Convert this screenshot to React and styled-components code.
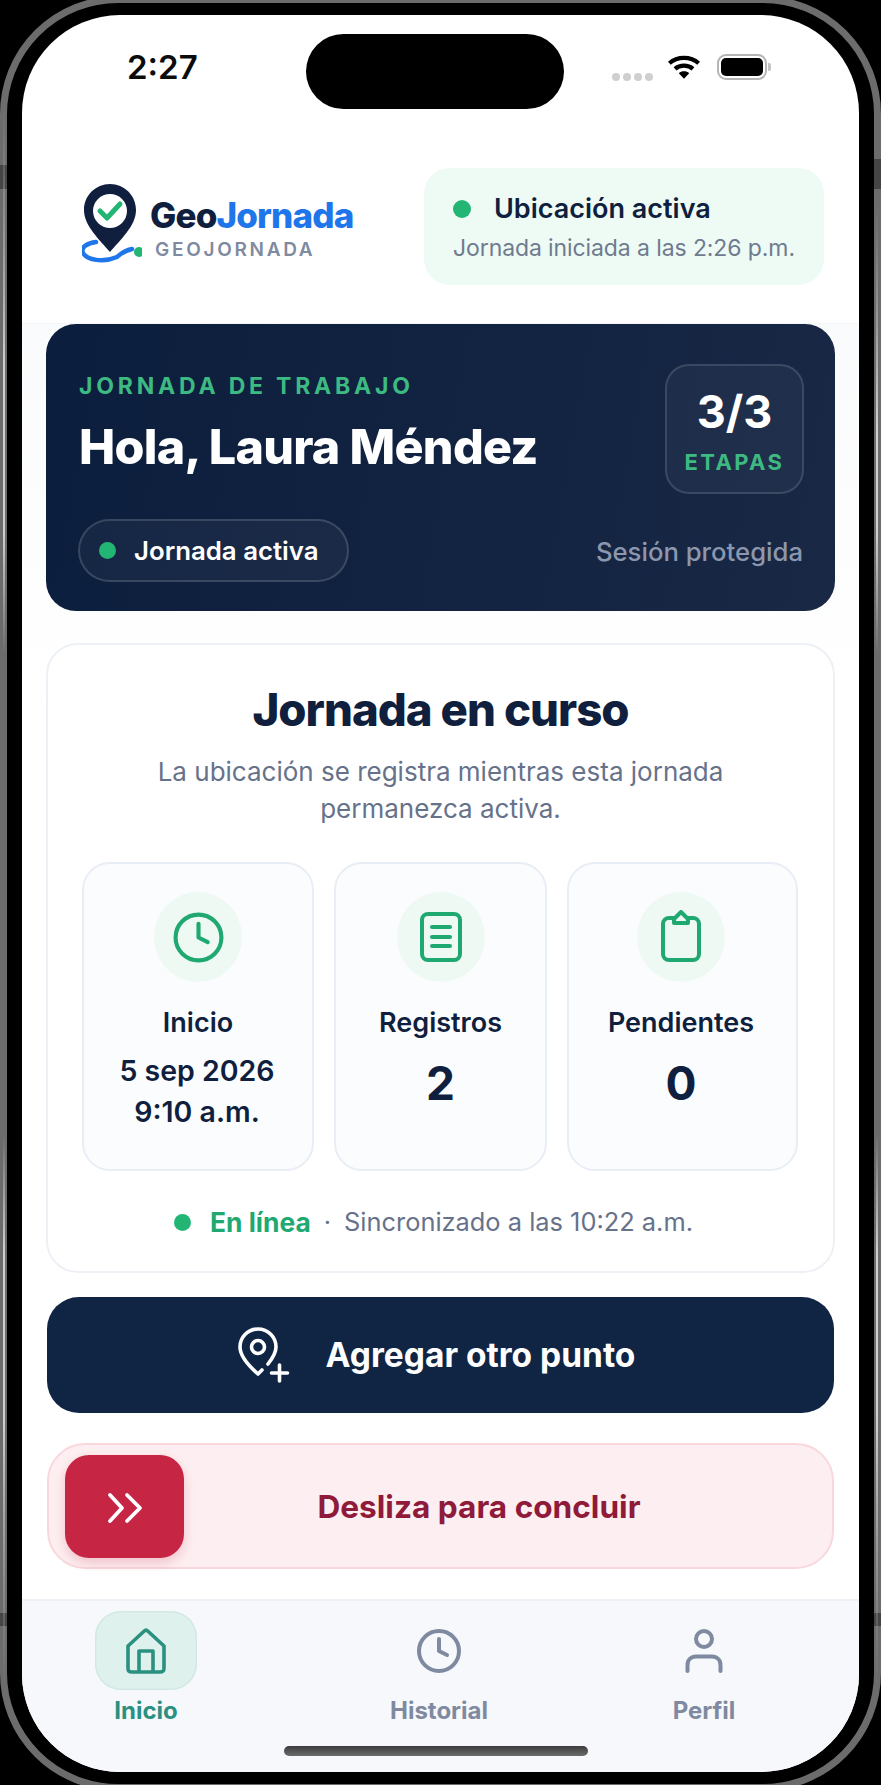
import React from "react";
import styled, { createGlobalStyle } from "styled-components";
import { Clock } from "lucide-react";

const Global = createGlobalStyle`
  html, body { margin: 0; padding: 0; background: #000; }
  * { box-sizing: border-box; }
  body { font-family: Inter, "Noto Sans", sans-serif; -webkit-font-smoothing: antialiased; }
`;

const Stage = styled.div`
  width: 881px; height: 1785px; overflow: hidden; background: #000;
`;
const Shell = styled.div`
  position: relative;
  width: 881px; height: 1795px; margin-top: -4px;
  border: 7px solid #6c6c6c;
  border-radius: 118px;
  padding: 12px 15px;
  background: #000;
  &::after {
    content: ""; position: absolute; inset: -4px; border-radius: 114px;
    border: 2px solid #cfcfcf;
    mask: conic-gradient(from 0deg, transparent 0 4%, transparent 8% 9%, #000 12% 14%, transparent 17% 33%, #000 36% 39%, transparent 42% 58%, #000 61% 64%, transparent 67% 83%, #000 86% 89%, transparent 92%);
    pointer-events: none;
  }
`;
const Antenna = styled.div`
  position: absolute; top: ${p => p.$top}px; ${p => p.$side}: -7px; width: 7px; height: ${p => p.$h}px;
  background: #454545;
`;
const Screen = styled.div`
  width: 837px; height: 1757px; border-radius: 98px; overflow: hidden;
  background: #fff; display: flex; flex-direction: column;
`;
const StatusBar = styled.div`
  display: grid; grid-template-columns: 179px 258px 1fr; align-items: center;
  padding: 19px 92px 0 105px; height: 94px;
`;
const Time = styled.div`
  font-size: 33px; font-weight: 600; color: #0b0b0b; line-height: 1; margin-top: -8px;
`;
const Island = styled.div`
  height: 75px; border-radius: 38px; background: #000;
`;
const StatusIcons = styled.div`
  display: flex; justify-content: flex-end; align-items: flex-start; margin-top: -9px; gap: 14px;
`;
const Dots = styled.div`
  display: flex; gap: 3px; margin-top: 19px;
  span { width: 8px; height: 8px; border-radius: 50%; background: #cfcfcf; }
`;
const Battery = styled.div`
  position: relative; width: 50px; height: 26px; border: 2.5px solid #b5b5b5; border-radius: 9px; padding: 2px;
  margin-left: 2px;
  &::before { content: ""; display: block; height: 100%; background: #000; border-radius: 5px; }
  &::after { content: ""; position: absolute; right: -6px; top: 7px; width: 3px; height: 8px; background: #c4c4c4; border-radius: 0 2px 2px 0; }
`;
const Header = styled.header`
  display: flex; justify-content: space-between; align-items: center;
  padding: 59px 35px 38px 60px; border-bottom: 1px solid #f4f5f7;
`;
const Brand = styled.div`
  display: flex; align-items: flex-start; gap: 8px; margin-top: -6px;
`;
const BrandText = styled.div`
  display: flex; flex-direction: column; margin-top: 13px;
`;
const BrandName = styled.div`
  font-size: 35px; font-weight: 800; line-height: 40px; letter-spacing: -0.85px; color: #0f1f3d;
  span { color: #1f75ea; }
`;
const BrandSub = styled.div`
  font-size: 19px; font-weight: 600; line-height: 24px; letter-spacing: 2.7px; color: #7f8aa0; margin: 3px 0 0 5px;
`;
const LocationPill = styled.div`
  width: 400px; height: 117px; border-radius: 26px; background: #eefaf4;
  padding: 21px 20px 0 29px; display: flex; flex-direction: column; gap: 3px;
`;
const LocationRow = styled.div`
  display: flex; align-items: center; gap: 23px;
  font-size: 27px; font-weight: 600; color: #0f1f3d; line-height: 40px;
`;
const Dot = styled.span`
  flex: none; display: block; width: ${p => p.$size || 17}px; height: ${p => p.$size || 17}px;
  border-radius: 50%; background: #22b573;
`;
const LocationSub = styled.div`
  font-size: 23px; letter-spacing: -0.1px; color: #6f7b8f; line-height: 32px; white-space: nowrap;
`;
const Main = styled.main`
  flex: 1; padding: 0 24px 0 24px; background: linear-gradient(#fafbfc, #fff 30%, #fff);
  display: flex; flex-direction: column;
`;
const Hero = styled.section`
  height: 287px; border-radius: 30px; padding: 49px 31px 0 33px;
  background: linear-gradient(100deg, #0c1e3d, #182845);
  display: flex; flex-direction: column; width: 789px;
`;
const HeroTop = styled.div`
  display: flex; justify-content: space-between; align-items: flex-start;
`;
const Eyebrow = styled.div`
  font-size: 23px; font-weight: 700; letter-spacing: 3.8px; color: #3dba82; line-height: 28px; margin-top: -1px;
`;
const HeroName = styled.h1`
  margin: 19px 0 0; font-size: 48.4px; font-weight: 800; letter-spacing: -0.7px; color: #fff; line-height: 56px; white-space: nowrap;
`;
const StepBadge = styled.div`
  width: 139px; height: 130px; border-radius: 24px; border: 2px solid rgba(255,255,255,.13);
  background: rgba(255,255,255,.04); text-align: center; margin-top: -9px;
  display: flex; flex-direction: column; align-items: center; padding-top: 21px;
`;
const StepValue = styled.div`
  font-size: 45px; font-weight: 700; color: #fff; line-height: 50px;
`;
const StepLabel = styled.div`
  font-size: 22px; font-weight: 700; color: #3dba82; letter-spacing: 2.4px; line-height: 28px; margin-top: 11px;
`;
const HeroBottom = styled.div`
  display: flex; justify-content: space-between; align-items: center; margin-top: 25px;
`;
const ActivePill = styled.div`
  margin-left: -1px; width: 271px; height: 63px; border-radius: 32px; border: 2px solid rgba(255,255,255,.15);
  background: rgba(255,255,255,.04);
  display: flex; align-items: center; gap: 18px; padding-left: 19px;
  font-size: 25.8px; font-weight: 600; color: #fff; white-space: nowrap;
`;
const Protected = styled.div`
  font-size: 25.7px; font-weight: 500; color: #8c97ae; margin: 2px 1px 0 0;
`;
const Card = styled.section`
  margin-top: 32px; height: 630px; border-radius: 32px; border: 2px solid #edf0f5; background: #fff;
  padding: 37px 34px 0; display: flex; flex-direction: column; align-items: center;
`;
const CardTitle = styled.h2`
  margin: 0; font-size: 45.6px; font-weight: 800; letter-spacing: -1px; color: #0f1f3d; line-height: 56px;
`;
const CardText = styled.p`
  margin: 15px 0 0; font-size: 26px; color: #66728a; line-height: 37px; text-align: center; width: 620px;
`;
const Stats = styled.div`
  margin: 35px 0 0 -1px; display: grid; grid-template-columns: 232px 213px 231px; gap: 20px; width: 716px;
`;
const Stat = styled.div`
  height: 309px; border-radius: 28px; border: 2px solid #e9edf5; background: #fbfcfe;
  display: flex; flex-direction: column; align-items: center; padding: 28px ${p => p.$shift || 0}px 0 0; text-align: center;
`;
const IconCircle = styled.div`
  width: 88px; height: 90px; border-radius: 50%; background: #eef9f3; color: #1fa971;
  display: flex; align-items: center; justify-content: center;
`;
const StatLabel = styled.div`
  margin-top: 21px; font-size: 27px; font-weight: 600; color: #0f1f3d; line-height: 40px;
`;
const StatDate = styled.div`
  margin: 7px 2px 0 0; font-size: 28.5px; font-weight: 600; color: #0f1f3d; line-height: 41px; white-space: nowrap;
`;
const StatNumber = styled.div`
  margin-top: 15px; font-size: 46px; font-weight: 700; color: #0f1f3d; line-height: 50px;
`;
const SyncRow = styled.div`
  margin: 33px 14px 0 0; display: flex; align-items: center; font-size: 25.4px; color: #66728a; line-height: 36px; white-space: nowrap;
  b { font-size: 26.4px; font-weight: 700; color: #1fa971; margin-left: 19px; }
  i { font-style: normal; margin: 0 13px; }
`;
const AddButton = styled.button`
  margin: 24px 1px 0; height: 116px; border: 0; border-radius: 32px; background: #102544; color: #fff;
  display: flex; align-items: center; justify-content: center; gap: 36px;
  font-family: inherit; font-size: 33.5px; font-weight: 700; padding: 0 8px 0 0;
`;
const Slider = styled.div`
  margin: 30px 1px 0; height: 126px; border-radius: 38px; border: 2px solid #f8d8dd; background: #fdeff1;
  display: flex; align-items: center; padding-left: 16px;
`;
const Thumb = styled.div`
  flex: none; width: 119px; height: 103px; border-radius: 24px; background: #c62543;
  box-shadow: 0 5px 12px rgba(198,37,67,.22);
  display: flex; align-items: center; justify-content: center;
`;
const SliderLabel = styled.div`
  flex: 1; text-align: center; font-size: 31.6px; font-weight: 700; color: #8f1a3a; padding-right: 58px;
`;
const Nav = styled.nav`
  position: relative; height: 173px; background: #f6f8fc; border-top: 2px solid #eef1f5;
  display: flex; padding: 10px 0 0 73px; align-items: flex-start;
`;
const NavItem = styled.div`
  width: 102px; margin-left: ${p => p.$offset || 0}px;
  display: flex; flex-direction: column; align-items: center;
  font-size: 24px; font-weight: 700; color: ${p => (p.$active ? "#2a9080" : "#7f8aa0")}; line-height: 30px;
`;
const NavIcon = styled.div`
  width: 102px; height: 79px; border-radius: 26px; display: flex; align-items: center; justify-content: center;
  background: ${p => (p.$active ? "#dff1ec" : "transparent")};
  box-shadow: ${p => (p.$active ? "inset 0 0 0 1.5px #d2e9e3" : "none")};
  margin-bottom: 6px;
`;
const HomeIndicator = styled.div`
  position: absolute; left: 262px; top: 145px; width: 304px; height: 10px; border-radius: 5px;
  background: linear-gradient(#3c3c3c, #6c6c6c);
`;

const Logo = () => (
  <svg width="60" height="84" viewBox="82 182 60 84" fill="none" style={{ flex: "none" }}>
    <path d="M96 242C88 243 80 247 83 253C87 260 103 263 117 257C122 253 123 251 132 249" stroke="#1f75ea" strokeWidth="4.5" strokeLinecap="round" />
    <path d="M110 184C95.6 184 84 195.6 84 210C84 226 100 240 110 252C120 240 136 226 136 210C136 195.6 124.4 184 110 184Z" fill="#0f1f3d" />
    <circle cx="110" cy="211" r="17" fill="#fff" />
    <path d="M100 211L107 218L120 204" stroke="#22b573" strokeWidth="5" strokeLinecap="round" strokeLinejoin="round" />
    <circle cx="139" cy="252" r="5" fill="#22b573" />
  </svg>
);
const Wifi = () => (
  <svg width="34" height="26" viewBox="0 0 36 26" fill="none" stroke="#000" strokeWidth="4.4">
    <path d="M2.5 9C11 1.5 25 1.5 33.5 9" />
    <path d="M8.5 15C13.5 10.5 22.5 10.5 27.5 15" />
    <path d="M18 25.5L12.5 19.5C15.5 17 20.5 17 23.5 19.5Z" fill="#000" stroke="none" />
  </svg>
);
const DocIcon = () => (
  <svg width="42" height="50" viewBox="0 0 42 50" fill="none" stroke="currentColor" strokeWidth="4" strokeLinecap="round">
    <rect x="2" y="2" width="38" height="46" rx="6" />
    <path d="M12 15H30M12 25H30M12 34H30" />
  </svg>
);
const ClipIcon = () => (
  <svg width="40" height="52" viewBox="0 0 40 52" fill="none" stroke="currentColor" strokeWidth="4" strokeLinejoin="round" style={{ marginTop: -3 }}>
    <rect x="2" y="8" width="36" height="42" rx="6" />
    <path d="M13 13V9L20 2L27 9V13Z" fill="#eef9f3" />
  </svg>
);
const PinPlus = () => (
  <svg width="52" height="56" viewBox="0 0 52 56" fill="none" stroke="#fff" strokeWidth="3.6" strokeLinecap="round" strokeLinejoin="round">
    <path d="M24 43L20 47C12 40 2 30 2 20C2 10 10 2 20 2C30 2 38 10 38 20C38 26 34 32 30 37" />
    <circle cx="20" cy="20" r="6.5" />
    <path d="M41.5 38V54M33.5 46H49.5" />
  </svg>
);
const Chevrons = () => (
  <svg width="36" height="32" viewBox="0 0 36 32" fill="none" stroke="#fff" strokeWidth="3.8" strokeLinecap="round" strokeLinejoin="round" style={{ marginTop: 4 }}>
    <path d="M3 3L15 16L3 29" /><path d="M20 3L33 16L20 29" />
  </svg>
);
const HomeIcon = () => (
  <svg width="42" height="46" viewBox="0 0 42 46" fill="none" stroke="#2a9080" strokeWidth="3.6" strokeLinejoin="round">
    <path d="M19 3.2C20.2 2 21.8 2 23 3.2L39 18V40C39 43 38 44 35 44H7C4 44 3 43 3 40V18Z" />
    <path d="M14 44V23H28V44" />
  </svg>
);
const UserIcon = () => (
  <svg width="38" height="44" viewBox="0 0 38 44" fill="none" stroke="#7f8aa0" strokeWidth="4" strokeLinecap="round">
    <circle cx="19" cy="10" r="8" />
    <path d="M2.5 42V36C2.5 31 6 27.5 11 27.5H27C32 27.5 35.5 31 35.5 36V42" />
  </svg>
);

export default function App() {
  return (
    <Stage>
      <Global />
      <Shell>
        <Antenna $side="left" $top={162} $h={24} />
        <Antenna $side="right" $top={156} $h={30} />
        <Antenna $side="left" $top={1610} $h={13} />
        <Antenna $side="right" $top={1610} $h={13} />
        <Screen>
          <StatusBar>
            <Time>2:27</Time>
            <Island />
            <StatusIcons>
              <Dots><span /><span /><span /><span /></Dots>
              <Wifi />
              <Battery />
            </StatusIcons>
          </StatusBar>
          <Header>
            <Brand>
              <Logo />
              <BrandText>
                <BrandName>Geo<span>Jornada</span></BrandName>
                <BrandSub>GEOJORNADA</BrandSub>
              </BrandText>
            </Brand>
            <LocationPill>
              <LocationRow><Dot $size={18} />Ubicación activa</LocationRow>
              <LocationSub>Jornada iniciada a las 2:26 p.m.</LocationSub>
            </LocationPill>
          </Header>
          <Main>
            <Hero>
              <HeroTop>
                <div>
                  <Eyebrow>JORNADA DE TRABAJO</Eyebrow>
                  <HeroName>Hola, Laura Méndez</HeroName>
                </div>
                <StepBadge>
                  <StepValue>3/3</StepValue>
                  <StepLabel>ETAPAS</StepLabel>
                </StepBadge>
              </HeroTop>
              <HeroBottom>
                <ActivePill><Dot />Jornada activa</ActivePill>
                <Protected>Sesión protegida</Protected>
              </HeroBottom>
            </Hero>
            <Card>
              <CardTitle>Jornada en curso</CardTitle>
              <CardText>La ubicación se registra mientras esta jornada permanezca activa.</CardText>
              <Stats>
                <Stat>
                  <IconCircle><Clock size={55} strokeWidth={1.8} /></IconCircle>
                  <StatLabel>Inicio</StatLabel>
                  <StatDate>5 sep 2026<br />9:10 a.m.</StatDate>
                </Stat>
                <Stat>
                  <IconCircle><DocIcon /></IconCircle>
                  <StatLabel>Registros</StatLabel>
                  <StatNumber>2</StatNumber>
                </Stat>
                <Stat $shift={3}>
                  <IconCircle><ClipIcon /></IconCircle>
                  <StatLabel>Pendientes</StatLabel>
                  <StatNumber>0</StatNumber>
                </Stat>
              </Stats>
              <SyncRow>
                <Dot /><b>En línea</b><i>·</i>Sincronizado a las 10:22 a.m.
              </SyncRow>
            </Card>
            <AddButton><PinPlus />Agregar otro punto</AddButton>
            <Slider>
              <Thumb><Chevrons /></Thumb>
              <SliderLabel>Desliza para concluir</SliderLabel>
            </Slider>
          </Main>
          <Nav>
            <NavItem $active>
              <NavIcon $active><HomeIcon /></NavIcon>
              Inicio
            </NavItem>
            <NavItem $offset={191}>
              <NavIcon><Clock size={48} color="#7f8aa0" strokeWidth={2} /></NavIcon>
              Historial
            </NavItem>
            <NavItem $offset={163}>
              <NavIcon><UserIcon /></NavIcon>
              Perfil
            </NavItem>
            <HomeIndicator />
          </Nav>
        </Screen>
      </Shell>
    </Stage>
  );
}
